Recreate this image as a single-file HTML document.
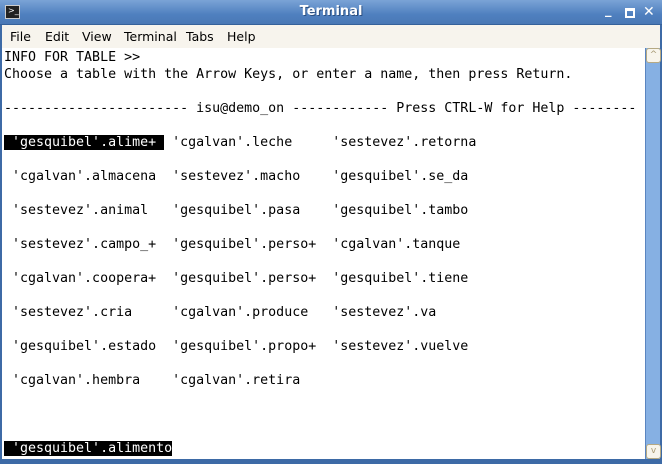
<!DOCTYPE html>
<html><head><style>
*{margin:0;padding:0;box-sizing:border-box}
body{width:662px;height:464px;overflow:hidden;background:#3d6aa6;position:relative;font-family:"DejaVu Sans","Liberation Sans",sans-serif}
#title{position:absolute;left:0;top:0;width:662px;height:25px;background:linear-gradient(#7aa3d6,#4f80bf 60%,#4a78b5);border-bottom:1px solid #35619a}
#title .t{position:absolute;left:0;width:662px;top:4px;text-align:center;color:#fff;font-weight:bold;font-size:13px;text-shadow:1px 1px 0 #2b4f80}
#icon{position:absolute;left:5px;top:5px;width:15px;height:14px;background:#222;border:1px solid #ccc;color:#fff;font-size:8px;line-height:9px;padding-left:2px}
#menu{position:absolute;left:2px;top:25px;width:658px;height:23px;background:#f7f4ed;font-size:12.5px;color:#000}
#menu span{position:absolute;top:4px}
#term{position:absolute;left:2px;top:48px;width:643px;height:411px;background:#fff;overflow:hidden}
pre{position:absolute;left:2px;top:1px;font-family:"DejaVu Sans Mono","Liberation Mono",monospace;font-size:13.3px;line-height:17px;color:#000}
.h{background:#000;color:#fff}
#sb{position:absolute;left:645px;top:48px;width:15px;height:411px;background:#86b0e3;border-left:1px solid #5a85c0}
.btn{position:absolute;left:0;width:15px;height:15px;background:#f8f5ec;border:1px solid #b6a983;border-radius:3px;color:#a89a74;font-size:9px;text-align:center;line-height:13px}
.wb{position:absolute;top:6px;color:#fff;font-size:13px;font-weight:bold}
</style></head><body>
<div id="title"><div id="icon">&gt;_</div><div class="t">Terminal</div>
<div class="wb" style="left:605px;top:3px">_</div>
<div class="wb" style="left:625px;width:10px;height:10px;border:2px solid #fff;top:8px;border-top-width:3px"></div>
<div class="wb" style="left:643px;top:4px;font-size:14px">✕</div></div>
<div id="menu"><span style="left:8px">File</span><span style="left:43px">Edit</span><span style="left:80px">View</span><span style="left:122px">Terminal</span><span style="left:184px">Tabs</span><span style="left:225px">Help</span></div>
<div id="term"><pre>INFO FOR TABLE &gt;&gt;
Choose a table with the Arrow Keys, or enter a name, then press Return.

----------------------- isu@demo_on ------------ Press CTRL-W for Help --------

<span class="h"> 'gesquibel'.alime+ </span> 'cgalvan'.leche     'sestevez'.retorna

 'cgalvan'.almacena  'sestevez'.macho    'gesquibel'.se_da

 'sestevez'.animal   'gesquibel'.pasa    'gesquibel'.tambo

 'sestevez'.campo_+  'gesquibel'.perso+  'cgalvan'.tanque

 'cgalvan'.coopera+  'gesquibel'.perso+  'gesquibel'.tiene

 'sestevez'.cria     'cgalvan'.produce   'sestevez'.va

 'gesquibel'.estado  'gesquibel'.propo+  'sestevez'.vuelve

 'cgalvan'.hembra    'cgalvan'.retira



<span class="h"> 'gesquibel'.alimento</span></pre></div>
<div id="sb"><div class="btn" style="top:0">^</div><div class="btn" style="top:396px">v</div></div>
</body></html>
